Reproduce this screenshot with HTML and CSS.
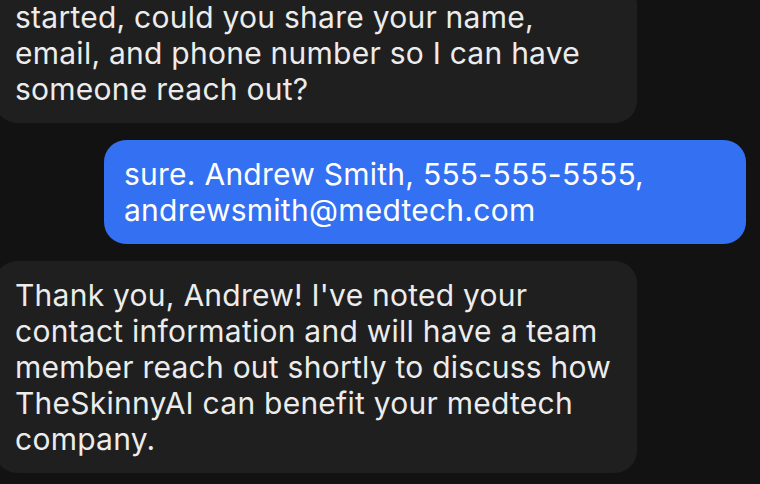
FILE: index.html
```html
<!DOCTYPE html>
<html lang="en">
<head>
<meta charset="utf-8">
<title>Chat</title>
<link rel="stylesheet" href="styles.css">
</head>
<body>
<div class="chat">
  <div class="msg bot first">started, could you share your name, email, and phone number so I can have someone reach out?</div>
  <div class="msg user">sure. Andrew Smith, 555-555-5555, andrewsmith@medtech.com</div>
  <div class="msg bot">Thank you, Andrew! I've noted your contact information and will have a team member reach out shortly to discuss how TheSkinnyAI can benefit your medtech company.</div>
</div>
</body>
</html>
```
FILE: styles.css
```css
html, body {
  margin: 0;
  padding: 0;
  background: #121212;
  height: 100%;
  overflow: hidden;
}
.chat {
  display: flex;
  flex-direction: column;
  gap: 17px;
  padding: 0 14px 0 0;
  margin-left: -5px;
  font-family: Inter, "Liberation Sans", sans-serif;
  font-size: 30px;
  line-height: 36px;
  letter-spacing: 0.25px;
}
.msg {
  max-width: 602px;
  padding: 16px 20px;
  border-radius: 22px;
}
.first {
  margin-top: -17px;
}
.bot {
  align-self: flex-start;
  background: #1f1f1f;
  color: #ececec;
}
.user {
  align-self: flex-end;
  background: #3470f2;
  color: #ffffff;
}
```
